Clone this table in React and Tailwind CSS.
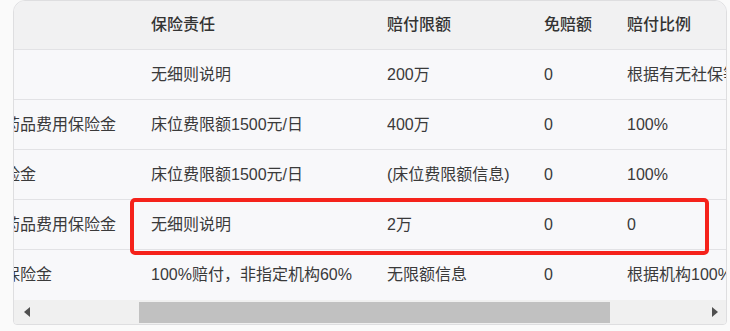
import React from 'react';

// 保障责任表（横向滚动后的视图）
const COLS = 'grid grid-cols-[147px_236px_157px_83px_260px]';

const HEADERS = ['', '保险责任', '赔付限额', '免赔额', '赔付比例'];

const ROWS = [
  ['', '无细则说明', '200万', '0', '根据有无社保等情况赔付'],
  ['药品费用保险金', '床位费限额1500元/日', '400万', '0', '100%'],
  ['险金', '床位费限额1500元/日', '(床位费限额信息)', '0', '100%'],
  ['药品费用保险金', '无细则说明', '2万', '0', '0'],
  ['保险金', '100%赔付，非指定机构60%', '无限额信息', '0', '根据机构100%赔付'],
];

function Triangle({ dir }) {
  return (
    <svg width="6" height="10" viewBox="0 0 6 10">
      {dir === 'left'
        ? <path d="M6 0 L0 5 L6 10 Z" fill="#505050" />
        : <path d="M0 0 L6 5 L0 10 Z" fill="#505050" />}
    </svg>
  );
}

export default function App() {
  return (
    <div className="h-[331px] w-[730px] overflow-hidden bg-[#fafafa] pl-[13px] font-['Liberation_Sans','Noto_Sans_CJK_SC',sans-serif] text-base">
      <div className="relative w-[714px] overflow-hidden rounded-t-[12px] rounded-b-[4px] border border-[#dedee0] bg-[#f8f8fa]">
        <div className="overflow-hidden">
          <div className="-ml-[30px] w-[883px]">
            {/* header */}
            <div className={`${COLS} h-[49px] border-b border-[#e2e2e5] bg-[#f1f1f2] font-medium text-[#333]`}>
              {HEADERS.map((h, i) => (
                <div key={i} className="flex items-center whitespace-nowrap pl-[20px]">{h}</div>
              ))}
            </div>
            {/* body */}
            {ROWS.map((row, r) => (
              <div
                key={r}
                className={`${COLS} h-[50px] text-[#3a3a3a] ${r < ROWS.length - 1 ? 'border-b border-[#e2e2e5]' : ''}`}
              >
                {row.map((c, i) => (
                  <div key={i} className="flex items-center whitespace-nowrap pl-[20px]">{c}</div>
                ))}
              </div>
            ))}
          </div>
        </div>

        {/* horizontal scrollbar */}
        <div className="flex h-[24px] items-center bg-[#f0f0f0]">
          <div className="flex w-[24px] items-center pl-[10px]"><Triangle dir="left" /></div>
          <div className="w-[101px]" />
          <div className="mt-[1px] h-[21px] w-[471px] bg-[#c1c1c1]" />
          <div className="flex-1" />
          <div className="flex w-[24px] items-center justify-end pr-[8px]"><Triangle dir="right" /></div>
        </div>

        {/* red highlight annotation */}
        <div className="absolute left-[116px] top-[197px] h-[57px] w-[579px] rounded-[5px] border-4 border-[#f5221b]" />
      </div>
    </div>
  );
}
